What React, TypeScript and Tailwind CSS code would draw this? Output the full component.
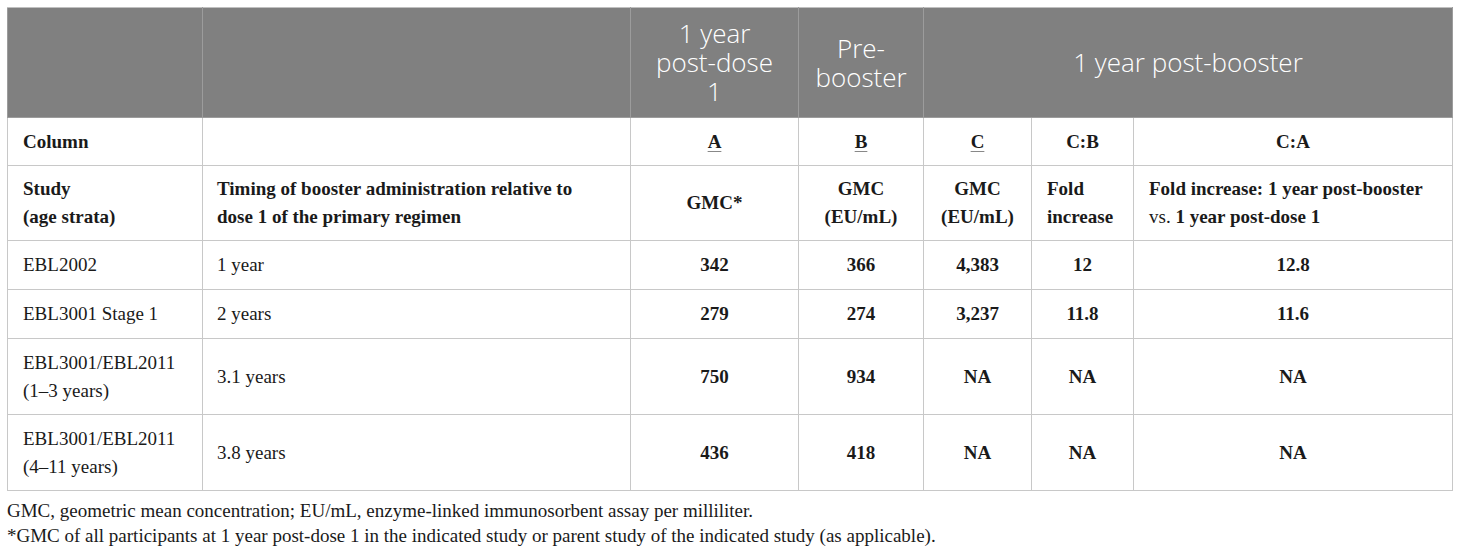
import React from "react";

const cellB = "border border-[#c8c8c8] align-middle";
const headB = "border border-[#9c9c9c] border-t-[#c0c0c0] font-light text-center align-middle";

export default function App() {
  return (
    <div className="w-[1460px] h-[552px] bg-white pt-[7px] pl-[7px] font-['Liberation_Serif',serif] text-[#1a1a1a]">
      <table className="table-fixed border-collapse w-[1445px] text-[19px] leading-[28px]">
        <colgroup>
          <col className="w-[195px]" />
          <col className="w-[428px]" />
          <col className="w-[168px]" />
          <col className="w-[125px]" />
          <col className="w-[108px]" />
          <col className="w-[102px]" />
          <col className="w-[319px]" />
        </colgroup>
        <thead>
          <tr className="h-[110px] bg-[#808080] text-white font-['Open_Sans',sans-serif] font-light text-[26px] leading-[29px]">
            <th className={headB}></th>
            <th className={headB}></th>
            <th className={headB}>
              1 year
              <br />
              post-dose
              <br />1
            </th>
            <th className={headB}>
              Pre-
              <br />
              booster
            </th>
            <th colSpan={3} className={headB}>
              1 year post-booster
            </th>
          </tr>
        </thead>
        <tbody>
          <tr className="h-[48px] font-bold">
            <td className={`${cellB} pl-[15px]`}>Column</td>
            <td className={cellB}></td>
            <td className={`${cellB} text-center`}>
              <span className="underline underline-offset-[3px] decoration-[#888]">A</span>
            </td>
            <td className={`${cellB} text-center`}>
              <span className="underline underline-offset-[3px] decoration-[#888]">B</span>
            </td>
            <td className={`${cellB} text-center`}>
              <span className="underline underline-offset-[3px] decoration-[#888]">C</span>
            </td>
            <td className={`${cellB} text-center`}>C:B</td>
            <td className={`${cellB} text-center`}>C:A</td>
          </tr>
          <tr className="h-[75px] font-bold">
            <td className={`${cellB} pl-[15px]`}>
              Study
              <br />
              (age strata)
            </td>
            <td className={`${cellB} pl-[14px]`}>
              Timing of booster administration relative to
              <br />
              dose 1 of the primary regimen
            </td>
            <td className={`${cellB} text-center`}>GMC*</td>
            <td className={`${cellB} text-center`}>
              GMC
              <br />
              (EU/mL)
            </td>
            <td className={`${cellB} text-center`}>
              GMC
              <br />
              (EU/mL)
            </td>
            <td className={`${cellB} pl-[15px]`}>
              Fold
              <br />
              increase
            </td>
            <td className={`${cellB} pl-[15px]`}>
              Fold increase: 1 year post-booster
              <br />
              <span className="font-normal">vs.</span> 1 year post-dose 1
            </td>
          </tr>
          {[
            { h: "h-[49px]", s: ["EBL2002"], t: "1 year", v: ["342", "366", "4,383", "12", "12.8"] },
            { h: "h-[49px]", s: ["EBL3001 Stage 1"], t: "2 years", v: ["279", "274", "3,237", "11.8", "11.6"] },
            { h: "h-[76px]", s: ["EBL3001/EBL2011", "(1\u20133 years)"], t: "3.1 years", v: ["750", "934", "NA", "NA", "NA"] },
            { h: "h-[76px]", s: ["EBL3001/EBL2011", "(4\u201311 years)"], t: "3.8 years", v: ["436", "418", "NA", "NA", "NA"] },
          ].map((r, i) => (
            <tr key={i} className={r.h}>
              <td className={`${cellB} pl-[15px]`}>
                {r.s.map((x, j) => (
                  <div key={j}>{x}</div>
                ))}
              </td>
              <td className={`${cellB} pl-[14px]`}>{r.t}</td>
              {r.v.map((x, j) => (
                <td key={j} className={`${cellB} text-center font-bold`}>
                  {x}
                </td>
              ))}
            </tr>
          ))}
        </tbody>
      </table>
      <div className="mt-[7px] text-[19px] leading-[25px]">
        <p>GMC, geometric mean concentration; EU/mL, enzyme-linked immunosorbent assay per milliliter.</p>
        <p>*GMC of all participants at 1 year post-dose 1 in the indicated study or parent study of the indicated study (as applicable).</p>
      </div>
    </div>
  );
}
